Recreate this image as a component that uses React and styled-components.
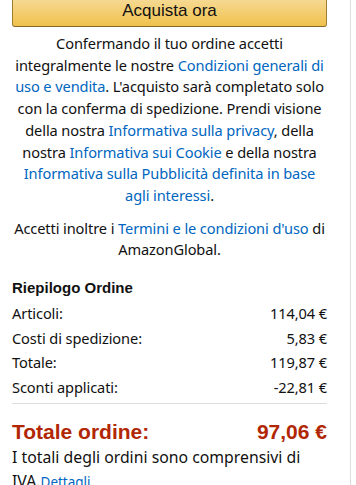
import React from 'react';
import styled, { createGlobalStyle } from 'styled-components';

const GlobalStyle = createGlobalStyle`
 body {
   margin: 0;
   background: #fff;
   font-family: "Noto Sans", "Liberation Sans", Arial, sans-serif;
   color: #111;
 }
`;

const Panel = styled.div`
 width: 327px;
 padding: 0 11px 0 12px;
 border-right: 1px solid #ddd;
 margin-top: -8px;
 min-height: 500px;
 box-sizing: content-box;
`;

const Inner = styled.div`
 width: 315px;
`;

const BuyButton = styled.button`
 display: block;
 width: 315px;
 height: 35px;
 padding: 2px 0 0;
 border: 1px solid;
 border-color: #a88734 #9c7e31 #846a29;
 border-radius: 3px;
 background: linear-gradient(to bottom, #f7dfa5, #f0c14b);
 font-family: "Liberation Sans", Arial, sans-serif;
 font-size: 17px;
 color: #111;
 line-height: 24px;
`;

const Legal = styled.p`
 margin: ${p => p.$top || 0}px 0 0;
 text-align: center;
 font-size: 14.6px;
 letter-spacing: -0.1px;
 line-height: 21.7px;
 color: #111;
`;

const Link = styled.a`
 color: #0066c0;
 text-decoration: none;
`;

const SummaryTitle = styled.h3`
 margin: 16px 0 2px;
 font-family: "Liberation Sans", Arial, sans-serif;
 font-weight: bold;
 font-size: 15px;
 line-height: 22px;
 color: #111;
`;

const Row = styled.div`
 display: flex;
 justify-content: space-between;
 font-size: 14.6px;
 letter-spacing: -0.1px;
 line-height: 24.6px;
 color: #111;
`;

const Divider = styled.hr`
 border: 0;
 border-top: 1px solid #ddd;
 margin: 4px 0 15px;
`;

const GrandTotal = styled.div`
 display: flex;
 justify-content: space-between;
 font-family: "Liberation Sans", Arial, sans-serif;
 font-weight: bold;
 font-size: 21px;
 line-height: 26px;
 color: #b12704;
`;

const Note = styled.p`
 margin: 0;
 font-size: 15.8px;
 line-height: 24px;
 color: #111;
`;

const SmallLink = styled(Link)`
 font-size: 13.5px;
`;

const rows = [
 ['Articoli:', '114,04 €'],
 ['Costi di spedizione:', '5,83 €'],
 ['Totale:', '119,87 €'],
 ['Sconti applicati:', '-22,81 €'],
];

export default function App() {
 return (
   <>
     <GlobalStyle />
     <Panel>
       <Inner>
         <BuyButton>Acquista ora</BuyButton>
         <Legal $top={6}>
           Confermando il tuo ordine accetti integralmente le nostre{' '}
           <Link href="#">Condizioni generali di uso e vendita</Link>. L'acquisto
           sarà completato solo con la conferma di spedizione. Prendi visione della
           nostra <Link href="#">Informativa sulla privacy</Link>, della nostra{' '}
           <Link href="#">Informativa sui Cookie</Link> e della nostra{' '}
           <Link href="#">Informativa sulla Pubblicità definita in base agli interessi</Link>.
         </Legal>
         <Legal $top={11}>
           Accetti inoltre i <Link href="#">Termini e le condizioni d'uso</Link> di
           AmazonGlobal.
         </Legal>
         <SummaryTitle>Riepilogo Ordine</SummaryTitle>
         {rows.map(([label, value]) => (
           <Row key={label}>
             <span>{label}</span>
             <span>{value}</span>
           </Row>
         ))}
         <Divider />
         <GrandTotal>
           <span>Totale ordine:</span>
           <span>97,06 €</span>
         </GrandTotal>
         <Note>
           I totali degli ordini sono comprensivi di IVA.<SmallLink href="#">Dettagli</SmallLink>
         </Note>
       </Inner>
     </Panel>
   </>
 );
}
